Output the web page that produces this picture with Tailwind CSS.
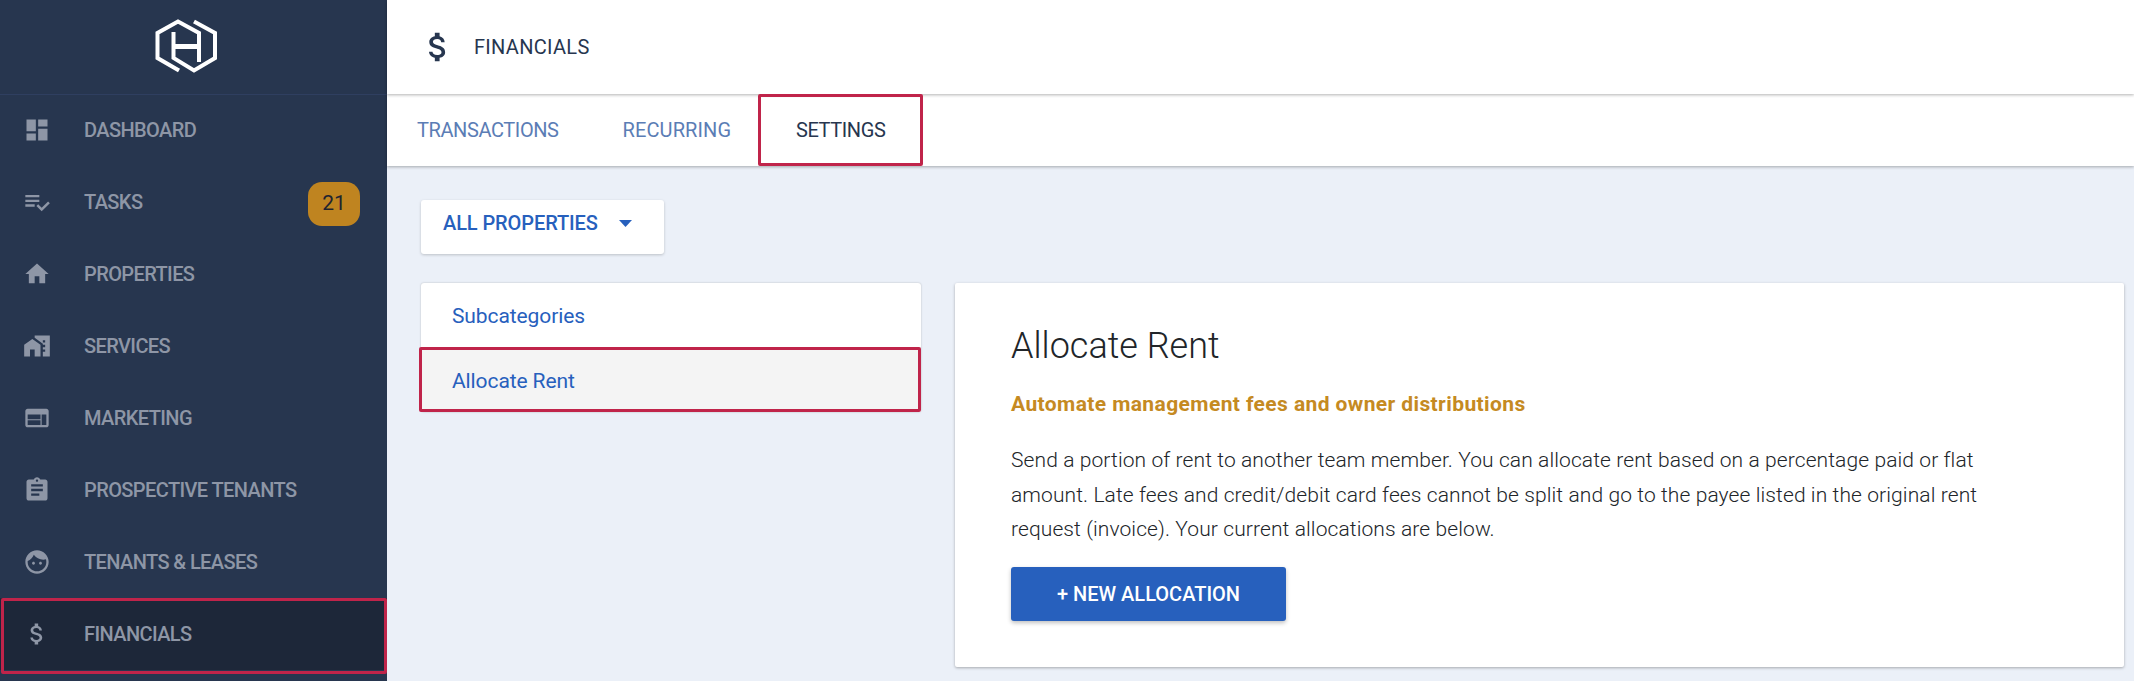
<!DOCTYPE html>
<html lang="en">
<head>
  <meta charset="UTF-8">
  <meta name="viewport" content="width=device-width, initial-scale=1.0">
  <title>Financials</title>
  <script src="https://cdn.jsdelivr.net/npm/@tailwindcss/browser@4"></script>
</head>
<body class="h-[681px] overflow-hidden bg-[#ebf0f8] font-['Roboto',sans-serif]">
  <div class="flex h-[681px]">
    <!-- sidebar -->
    <aside class="w-[387px] shrink-0 h-full bg-[#27364f] text-[#8e96a6]">
      <div class="h-[95px] -mb-[1px] flex items-center justify-center border-b border-[#2f3f60]">
        <svg class="w-[70px] h-[62px] -mt-[2px] -ml-[16px]" viewBox="150 15 70 62" fill="none" stroke="#fff" stroke-width="4">
          <path d="M198 62V33L177 21.5 156.500 33V58L178 70.500" />
          <path d="M172.500 32V58L193 70.500 214 58V33L193 21.500" />
          <path d="M172.500 46.500H198" stroke-width="5" />
        </svg>
      </div>
      <nav class="text-[20px] font-medium tracking-[-0.6px]">
        <a class="h-[72px] flex items-center">
          <svg class="w-[28px] h-[28px] ml-[23px] mr-[33px]" viewBox="0 0 24 24" fill="currentColor"><path d="M3 13h8V3H3v10zm0 8h8v-6H3v6zm10 0h8V11h-8v10zm0-18v6h8V3h-8z"/></svg>
          <span>DASHBOARD</span>
        </a>
        <a class="h-[72px] flex items-center">
          <svg class="w-[28px] h-[28px] ml-[23px] mr-[33px]" viewBox="0 0 24 24" fill="currentColor"><path d="M14 10H2v2h12v-2zm0-4H2v2h12V6zM2 16h8v-2H2v2zm19.5-4.5L23 13l-6.99 7-4.51-4.5L13 14l3.01 3 5.49-5.5z"/></svg>
          <span>TASKS</span>
          <span class="ml-auto mr-[27px] mt-[3px] w-[52px] h-[44px] flex items-center justify-center rounded-[14px] bg-[#bf8420] text-[#1f2430] font-normal tracking-normal text-[21px]">21</span>
        </a>
        <a class="h-[72px] flex items-center">
          <svg class="w-[28px] h-[28px] ml-[23px] mr-[33px]" viewBox="0 0 24 24" fill="currentColor"><path d="M10 20v-6h4v6h5v-8h3L12 3 2 12h3v8z"/></svg>
          <span>PROPERTIES</span>
        </a>
        <a class="h-[72px] flex items-center">
          <svg class="w-[28px] h-[28px] ml-[23px] mr-[33px]" viewBox="0 0 24 24" fill="currentColor"><path fill-rule="evenodd" d="M1 11v10h5v-6h4v6h5V11L8 6zM10 3v1.97l7 5V11h2v2h-2v2h2v2h-2v4h6V3H10zm9 6h-2V7h2v2z"/></svg>
          <span>SERVICES</span>
        </a>
        <a class="h-[72px] flex items-center">
          <svg class="w-[28px] h-[28px] ml-[23px] mr-[33px]" viewBox="0 0 24 24" fill="currentColor"><path d="M20 4H4c-1.1 0-1.99.9-1.99 2L2 18c0 1.1.9 2 2 2h16c1.1 0 2-.9 2-2V6c0-1.1-.9-2-2-2zm-5 14H4v-4h11v4zm0-5H4V9h11v4zm5 5h-4V9h4v9z"/></svg>
          <span>MARKETING</span>
        </a>
        <a class="h-[72px] flex items-center">
          <svg class="w-[28px] h-[28px] ml-[23px] mr-[33px]" viewBox="0 0 24 24" fill="currentColor"><path d="M19 3h-4.18C14.4 1.84 13.3 1 12 1c-1.3 0-2.4.84-2.82 2H5c-1.1 0-2 .9-2 2v14c0 1.1.9 2 2 2h14c1.1 0 2-.9 2-2V5c0-1.1-.9-2-2-2zm-7 0c.55 0 1 .45 1 1s-.45 1-1 1-1-.45-1-1 .45-1 1-1zm2 14H7v-2h7v2zm3-4H7v-2h10v2zm0-4H7V7h10v2z"/></svg>
          <span>PROSPECTIVE TENANTS</span>
        </a>
        <a class="h-[72px] flex items-center">
          <svg class="w-[28px] h-[28px] ml-[23px] mr-[33px]" viewBox="0 0 24 24" fill="currentColor"><path d="M9 11.75c-.69 0-1.25.56-1.25 1.25s.56 1.25 1.25 1.25 1.25-.56 1.25-1.25-.56-1.25-1.25-1.25zm6 0c-.69 0-1.25.56-1.25 1.25s.56 1.25 1.25 1.25 1.25-.56 1.25-1.25-.56-1.25-1.25-1.25zM12 2C6.48 2 2 6.48 2 12s4.48 10 10 10 10-4.48 10-10S17.52 2 12 2zm0 18c-4.41 0-8-3.59-8-8 0-.29.02-.58.05-.86 2.36-1.05 4.23-2.98 5.21-5.37C11.07 8.33 14.05 10 17.42 10c.78 0 1.53-.09 2.25-.26.21.71.33 1.47.33 2.26 0 4.41-3.59 8-8 8z"/></svg>
          <span>TENANTS &amp; LEASES</span>
        </a>
        <a class="relative h-[72px] flex items-center bg-[#1d2739]">
          <svg class="w-[28px] h-[28px] ml-[23px] mr-[33px]" viewBox="0 0 24 24" fill="currentColor"><path d="M11.8 10.9c-2.27-.59-3-1.2-3-2.15 0-1.09 1.01-1.85 2.7-1.85 1.78 0 2.44.85 2.5 2.1h2.21c-.07-1.72-1.12-3.3-3.21-3.81V3h-3v2.16c-1.94.42-3.5 1.68-3.5 3.61 0 2.31 1.91 3.46 4.7 4.13 2.5.6 3 1.48 3 2.41 0 .69-.49 1.79-2.7 1.79-2.06 0-2.87-.92-2.98-2.1h-2.2c.12 2.19 1.76 3.42 3.68 3.83V21h3v-2.15c1.95-.37 3.5-1.5 3.5-3.55 0-2.84-2.43-3.81-4.7-4.4z"/></svg>
          <span>FINANCIALS</span>
          <div class="absolute left-[1px] right-0 top-0 -bottom-[4px] border-[3px] border-[#c0244a] rounded-[2px]"></div>
        </a>
      </nav>
    </aside>

    <!-- main -->
    <main class="flex-1 min-w-0">
      <header class="h-[94px] bg-white flex items-center shadow-[0_1px_3px_rgba(0,0,0,0.3)] relative text-[#27364f]">
        <svg class="w-[38px] h-[38px] ml-[32px] mr-[17px]" viewBox="0 0 24 24" fill="currentColor"><path d="M11.8 10.9c-2.27-.59-3-1.2-3-2.15 0-1.09 1.01-1.85 2.7-1.85 1.78 0 2.44.85 2.5 2.1h2.21c-.07-1.72-1.12-3.3-3.21-3.81V3h-3v2.16c-1.94.42-3.5 1.68-3.5 3.61 0 2.31 1.91 3.46 4.7 4.13 2.5.6 3 1.48 3 2.41 0 .69-.49 1.79-2.7 1.79-2.06 0-2.87-.92-2.98-2.1h-2.2c.12 2.19 1.76 3.42 3.68 3.83V21h3v-2.15c1.95-.37 3.5-1.5 3.5-3.55 0-2.84-2.43-3.81-4.7-4.4z"/></svg>
        <span class="text-[20px] tracking-[0.3px]">FINANCIALS</span>
      </header>
      <div class="h-[72px] bg-white flex items-stretch shadow-[0_1px_3px_rgba(0,0,0,0.3)] text-[20px] tracking-[-0.4px]">
        <a class="ml-[30px] mr-[64px] flex items-center text-[#5b7db5]">TRANSACTIONS</a>
        <a class="mr-[27px] flex items-center tracking-[0.1px] text-[#5b7db5]">RECURRING</a>
        <a class="relative w-[165px] flex items-center justify-center text-[#27364f]">
          SETTINGS
          <div class="absolute inset-0 border-[3px] border-[#c0244a] rounded-[2px]"></div>
        </a>
      </div>

      <div class="pt-[34px] pl-[34px] pr-[10px]">
        <button class="h-[54px] w-[243px] pl-[22px] pb-[8px] flex items-center bg-white rounded-[3px] shadow-[0_1px_3px_rgba(0,0,0,0.2)] text-[#2760bd] text-[20px] font-medium tracking-[-0.1px]">
          ALL PROPERTIES
          <svg class="ml-[21px] w-[13px] h-[7px]" viewBox="0 0 13 7" fill="currentColor"><path d="M0 0h13L6.500 7z"/></svg>
        </button>

        <div class="mt-[29px] flex items-start gap-[34px]">
          <div class="w-[500px] bg-white rounded-[3px] shadow-[0_0_2px_rgba(0,0,0,0.25)] text-[#2760bd] text-[21px] tracking-[-0.1px]">
            <a class="h-[64px] pl-[31px] pt-[3px] flex items-center">Subcategories</a>
            <a class="relative h-[65px] pl-[31px] pt-[4px] flex items-center bg-[#f4f4f4]">
              Allocate Rent
              <div class="absolute -left-[2px] right-0 top-0 bottom-0 border-[3px] border-[#c0244a] rounded-[2px]"></div>
            </a>
          </div>

          <section class="flex-1 h-[384px] bg-white rounded-[2px] shadow-[0_1px_3px_rgba(0,0,0,0.3)] pl-[56px] pt-[38px]">
            <h1 class="text-[36px] leading-[50px] font-light text-[#212529]">Allocate Rent</h1>
            <p class="mt-[18px] text-[21px] leading-[30px] font-bold tracking-[0.4px] text-[#c58a22]">Automate management fees and owner distributions</p>
            <p class="mt-[24px] w-[1000px] text-[21px] leading-[34.500px] font-light tracking-[0.1px] text-[#212529]">Send a portion of rent to another team member. You can allocate rent based on a percentage paid or flat amount. Late fees and credit/debit card fees cannot be split and go to the payee listed in the original rent request (invoice). Your current allocations are below.</p>
            <button class="mt-[20px] w-[275px] h-[54px] bg-[#2760bd] text-white rounded-[3px] text-[20px] font-medium shadow-[0_2px_4px_rgba(0,0,0,0.25)]">+ NEW ALLOCATION</button>
          </section>
        </div>
      </div>
    </main>
  </div>
</body>
</html>
